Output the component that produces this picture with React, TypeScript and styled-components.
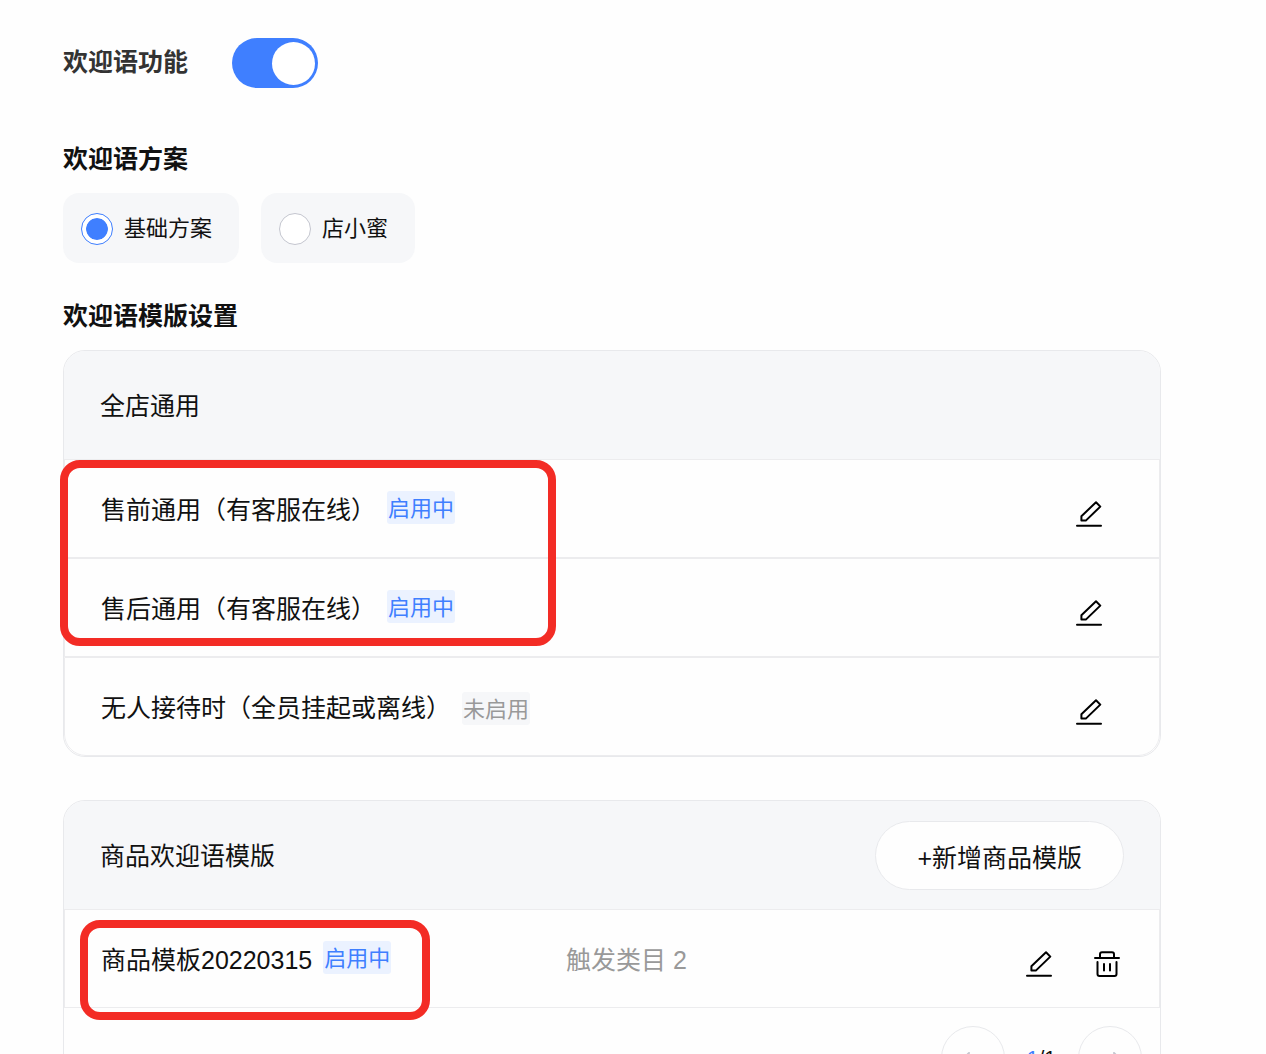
import React, { useState } from "react";
import styled, { createGlobalStyle } from "styled-components";

const blue = "#3f7fff";
const ink = "#111";
const line = "#e8e9ec";

const GlobalStyle = createGlobalStyle`
  *, *::before, *::after { box-sizing: border-box; }
  html { scrollbar-width: none; }
  body {
    margin: 0;
    background: #fefefe;
    color: ${ink};
    font-family: "Liberation Sans", "Noto Sans CJK SC", sans-serif;
    font-size: 25px;
    line-height: 36px;
  }
  button, input { font: inherit; color: inherit; margin: 0; }
`;

const Page = styled.main`
  height: 100vh;
  overflow-y: auto;
  scrollbar-width: none;
  padding: 38px 105px 38px 63px;
`;

const FeatureRow = styled.label`
  display: flex;
  width: fit-content;
  gap: 44px;
  margin-bottom: 52px;
  color: #333;
  font-weight: 700;
  line-height: 48px;
`;

const Switch = styled.input`
  appearance: none;
  display: flex;
  align-items: center;
  width: 86px;
  height: 50px;
  padding: 3px;
  border-radius: 25px;
  background: #c4c6cf;
  &::before {
    content: "";
    width: 43px;
    height: 43px;
    border-radius: 50%;
    background: #fff;
  }
  &:checked { background: ${blue}; justify-content: flex-end; }
`;

const Heading = styled.h2`
  margin: 0 0 15px;
  font-size: 25px;
  font-weight: 700;
  line-height: 38px;
`;

const Options = styled.div`
  display: flex;
  gap: 22px;
  margin-bottom: 34px;
`;

const Option = styled.label`
  display: flex;
  align-items: center;
  gap: 11px;
  height: 70px;
  padding: 2px 27px 0 18px;
  border-radius: 16px;
  background: #f6f7f9;
  font-size: 22px;
`;

const Radio = styled.input`
  appearance: none;
  width: 32px;
  height: 32px;
  padding: 4px;
  border: 1px solid #c4c6cf;
  border-radius: 50%;
  background: #fff;
  &:checked {
    border-color: ${blue};
    background: ${blue} content-box;
    box-shadow: inset 0 0 0 4px #fff;
  }
`;

const Section = styled.section`
  position: relative;
  margin-bottom: 43px;
`;

const Card = styled.div`
  overflow: hidden;
  border: 1px solid ${line};
  border-radius: 22px;
`;

const CardHeader = styled.header`
  display: flex;
  align-items: center;
  justify-content: space-between;
  height: 108px;
  padding: 1px 36px 0;
  background: #f6f7f9;
`;

const CardTitle = styled.h3`
  margin: 0;
  font-size: 25px;
  font-weight: 400;
`;

const AddButton = styled.button`
  height: 69px;
  padding: 4px 41px 0;
  border: 1px solid ${line};
  border-radius: 35px;
  background: #fefefe;
`;

const List = styled.ul`
  margin: 0;
  padding: 0;
  list-style: none;
`;

const Row = styled.li<{ $trailing: number }>`
  display: grid;
  grid-template-columns: 465px 1fr auto;
  height: 99px;
  padding: 31px ${(p) => p.$trailing}px 0 36px;
  border: 1px solid #ececee;
  ${Card} &:nth-child(3) { border-radius: 0 0 22px 22px; }
`;

const Name = styled.div`
  display: flex;
  gap: 11px;
  height: 36px;
  line-height: 39px;
  white-space: nowrap;
`;

const Tag = styled.span<{ $on: boolean }>`
  align-self: ${(p) => (p.$on ? "flex-start" : "flex-end")};
  padding: 2px 1px 0;
  border-radius: 3px;
  background: ${(p) => (p.$on ? "#ebf2ff" : "#f6f7f9")};
  color: ${(p) => (p.$on ? blue : "#999")};
  font-size: 22px;
  line-height: 31px;
`;

const Meta = styled.span`
  color: #999;
  line-height: 39px;
`;

const Actions = styled.div`
  display: flex;
  gap: 42px;
  padding-top: 10px;
`;

const IconButton = styled.button`
  width: 26px;
  height: 26px;
  padding: 0;
  border: 0;
  background: none;
  color: #000;
  svg { display: block; }
`;

const Pager = styled.nav`
  display: flex;
  align-items: center;
  justify-content: flex-end;
  gap: 22px;
  padding: 18px 18px 18px 0;
`;

const PageButton = styled.button`
  display: grid;
  place-items: center;
  width: 64px;
  height: 64px;
  padding: 0;
  border: 1px solid ${line};
  border-radius: 50%;
  background: #fefefe;
  color: #c4c6cf;
`;

const PageCount = styled.span`
  font-size: 21px;
  b { color: ${blue}; font-weight: 400; }
`;

const Highlight = styled.div<{ $x: number; $y: number; $w: number; $h: number }>`
  position: absolute;
  left: ${(p) => p.$x}px;
  top: ${(p) => p.$y}px;
  width: ${(p) => p.$w}px;
  height: ${(p) => p.$h}px;
  border: 8px solid #f32c25;
  border-radius: 20px;
  pointer-events: none;
`;

const stroke = {
  fill: "none",
  stroke: "currentColor",
  strokeWidth: 2,
  strokeLinecap: "round" as const,
  strokeLinejoin: "round" as const,
};

const EditIcon = () => (
  <svg width="26" height="26" viewBox="0 0 26 26" {...stroke}>
    <path d="M5.4 19.6v-4.4L20 1.3l4.3 4.3L9.8 19.6z" />
    <path d="M1 24.8h24" />
  </svg>
);

const TrashIcon = () => (
  <svg width="26" height="26" viewBox="0 0 26 26" {...stroke}>
    <path d="M1 7h24M6 7V3.2q0-2 2-2h10q2 0 2 2V7M3.5 11v12q0 2 2 2h15q2 0 2-2V11M10 13v6.5M16 13v6.5" />
  </svg>
);

const Arrow = ({ back }: { back?: boolean }) => (
  <svg width="20" height="20" viewBox="0 0 20 20" {...stroke}>
    <path d={back ? "M18 10H1M6 5L1 10l5 5" : "M2 10h17M14 5l5 5-5 5"} />
  </svg>
);

const shopRows = [
  { name: "售前通用（有客服在线）", on: true },
  { name: "售后通用（有客服在线）", on: true },
  { name: "无人接待时（全员挂起或离线）", on: false },
];

export default function App() {
  const [enabled, setEnabled] = useState(true);
  const [plan, setPlan] = useState("基础方案");
  return (
    <Page>
      <GlobalStyle />
      <FeatureRow>
        欢迎语功能
        <Switch type="checkbox" role="switch" checked={enabled} onChange={() => setEnabled(!enabled)} />
      </FeatureRow>

      <Heading>欢迎语方案</Heading>
      <Options>
        {["基础方案", "店小蜜"].map((name) => (
          <Option key={name}>
            <Radio type="radio" name="plan" checked={plan === name} onChange={() => setPlan(name)} />
            {name}
          </Option>
        ))}
      </Options>

      <Heading>欢迎语模版设置</Heading>
      <Section>
        <Card>
          <CardHeader>
            <CardTitle>全店通用</CardTitle>
          </CardHeader>
          <List>
            {shopRows.map((row) => (
              <Row key={row.name} $trailing={57}>
                <Name>
                  {row.name}
                  <Tag $on={row.on}>{row.on ? "启用中" : "未启用"}</Tag>
                </Name>
                <span />
                <Actions>
                  <IconButton aria-label="编辑"><EditIcon /></IconButton>
                </Actions>
              </Row>
            ))}
          </List>
        </Card>
        <Highlight $x={-3} $y={110} $w={496} $h={186} />
      </Section>

      <Section>
        <Card>
          <CardHeader>
            <CardTitle>商品欢迎语模版</CardTitle>
            <AddButton>+新增商品模版</AddButton>
          </CardHeader>
          <List>
            <Row $trailing={39}>
              <Name>
                商品模板20220315
                <Tag $on>启用中</Tag>
              </Name>
              <Meta>触发类目 2</Meta>
              <Actions>
                <IconButton aria-label="编辑"><EditIcon /></IconButton>
                <IconButton aria-label="删除"><TrashIcon /></IconButton>
              </Actions>
            </Row>
          </List>
          <Pager>
            <PageButton aria-label="上一页"><Arrow back /></PageButton>
            <PageCount><b>1</b>/1</PageCount>
            <PageButton aria-label="下一页"><Arrow /></PageButton>
          </Pager>
        </Card>
        <Highlight $x={17} $y={120} $w={350} $h={100} />
      </Section>
    </Page>
  );
}
